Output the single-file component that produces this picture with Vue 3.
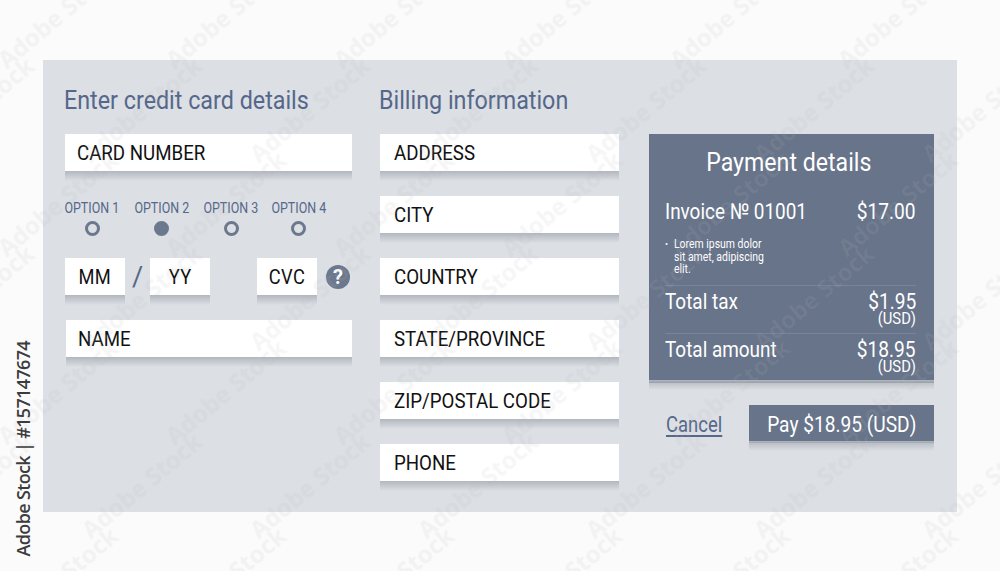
<script setup>
const fields = ['ADDRESS', 'CITY', 'COUNTRY', 'STATE/PROVINCE', 'ZIP/POSTAL CODE', 'PHONE']
const options = [
  { label: 'OPTION 1', on: false },
  { label: 'OPTION 2', on: true },
  { label: 'OPTION 3', on: false },
  { label: 'OPTION 4', on: false },
]
const marks = []
for (let r = -1; r < 7; r++) {
  for (let c = -1; c < 8; c++) {
    marks.push({ x: c * 168 + (r % 2 ? 84 : 0) - 10, y: r * 94 + 50 })
  }
}
</script>

<template>
  <div class="page">
    <main class="panel">
      <section class="col-card">
        <h2 class="title"><span class="cx">Enter credit card details</span></h2>
        <div class="field"><span class="cx">CARD NUMBER</span></div>
        <div class="options">
          <div v-for="o in options" :key="o.label" class="option">
            <span class="opt-label"><span class="cx-c">{{ o.label }}</span></span>
            <span class="radio" :class="{ on: o.on }"></span>
          </div>
        </div>
        <div class="expiry">
          <div class="field small"><span class="cx-c">MM</span></div>
          <span class="slash">/</span>
          <div class="field small"><span class="cx-c">YY</span></div>
          <div class="field small cvc"><span class="cx-c">CVC</span></div>
          <span class="help">?</span>
        </div>
        <div class="field name"><span class="cx">NAME</span></div>
      </section>

      <section class="col-billing">
        <h2 class="title"><span class="cx">Billing information</span></h2>
        <div class="stack">
          <div v-for="f in fields" :key="f" class="field"><span class="cx">{{ f }}</span></div>
        </div>
      </section>

      <section class="col-pay">
        <div class="summary">
          <h3 class="sum-title"><span class="cx-c">Payment details</span></h3>
          <div class="row first">
            <span class="big"><span class="cx">Invoice № 01001</span></span>
            <span class="big right"><span class="cx-r">$17.00</span></span>
          </div>
          <div class="lorem">
            <span class="dot">•</span>
            <span class="cx lorem-text">Lorem ipsum dolor<br />sit amet, adipiscing<br />elit.</span>
          </div>
          <div class="row total">
            <span class="big"><span class="cx">Total tax</span></span>
            <span class="amount">
              <span class="big right"><span class="cx-r">$1.95</span></span>
              <span class="usd"><span class="cx-r">(USD)</span></span>
            </span>
          </div>
          <div class="row total">
            <span class="big"><span class="cx">Total amount</span></span>
            <span class="amount">
              <span class="big right"><span class="cx-r">$18.95</span></span>
              <span class="usd"><span class="cx-r">(USD)</span></span>
            </span>
          </div>
        </div>
        <div class="actions">
          <a class="cancel"><span class="cx-c">Cancel</span></a>
          <button class="pay"><span class="cx-c">Pay $18.95 (USD)</span></button>
        </div>
      </section>
    </main>

    <div class="marks" aria-hidden="true">
      <span v-for="(m, i) in marks" :key="i" class="mark" :style="{ left: m.x + 'px', top: m.y + 'px' }">Adobe Stock</span>
    </div>
    <div class="credit">Adobe Stock | #157147674</div>
  </div>
</template>

<style>
html, body { margin: 0; background: #fff; }
</style>

<style scoped>
.page {
  position: relative;
  width: 1000px;
  height: 571px;
  overflow: hidden;
  padding: 60px 43px 0;
  box-sizing: border-box;
  background: #fbfbfc;
  font-family: Roboto, "Liberation Sans", sans-serif;
}
.panel {
  display: grid;
  grid-template-columns: 287px 239px 285px;
  grid-template-rows: 452px;
  column-gap: 28px;
  height: 452px;
  padding: 0 23px 0 22px;
  box-sizing: border-box;
  background: #dcdfe4;
}
.panel > section { min-width: 0; }
.cx, .cx-c, .cx-r { display: inline-block; white-space: nowrap; transform: scaleX(0.87); }
.cx { transform-origin: left center; }
.cx-c { transform-origin: center; }
.cx-r { transform-origin: right center; }
.title {
  margin: 0 0 0 -1px;
  height: 74px;
  padding-top: 24px;
  box-sizing: border-box;
  font-size: 26px;
  line-height: 32px;
  font-weight: 400;
  color: #55678a;
  white-space: nowrap;
}
.title .cx { transform: scaleX(0.896); }
.field {
  position: relative;
  height: 37px;
  display: flex;
  align-items: center;
  padding-left: 12px;
  background: #fff;
  color: #111;
  font-size: 21px;
  white-space: nowrap;
}
.field .cx { transform: scaleX(0.89); }
.stack .field { padding-left: 14px; }
.field::after, .summary::after, .pay::after {
  content: "";
  position: absolute;
  left: 0;
  right: 0;
  top: 100%;
  height: 10px;
  background: linear-gradient(#b2b7bf, rgba(220, 223, 228, 0));
}
.options {
  display: flex;
  margin-top: 28px;
  margin-left: 0.5px;
  height: 59px;
}
.option {
  width: 69.5px;
  display: flex;
  flex-direction: column;
  align-items: center;
}
.option:first-child { margin-left: -8px; }
.option:last-child { margin-left: -2px; }
.opt-label {
  font-size: 14px;
  line-height: 18px;
  color: #55678a;
  white-space: nowrap;
}
.opt-label .cx-c { transform: scaleX(0.89); }
.radio {
  width: 15px;
  height: 15px;
  margin-top: 4px;
  box-sizing: border-box;
  border: 3px solid #6b788d;
  border-radius: 50%;
}
.radio.on { background: #6b788d; }
.expiry {
  display: flex;
  align-items: center;
  height: 37px;
}
.field.small {
  width: 60px;
  padding: 0;
  justify-content: center;
  flex: none;
  letter-spacing: 0.5px;
}
.slash {
  width: 25px;
  text-align: center;
  font-size: 27px;
  color: #55678a;
}
.field.cvc { margin-left: 47px; }
.help {
  width: 24px;
  height: 24px;
  margin-left: 9px;
  border-radius: 50%;
  background: #6b788d;
  color: #fff;
  font-size: 20px;
  font-weight: 700;
  line-height: 24px;
  text-align: center;
}
.field.name { margin: 25px 0 0 1px; }
.stack { display: flex; flex-direction: column; gap: 25px; }
.col-pay { padding-top: 74px; margin: 0 -2px 0 2px; }
.summary {
  position: relative;
  height: 249px;
  padding: 12px 18px 0 16px;
  box-sizing: border-box;
  background: #67748a;
  border-bottom: 3px solid #58647a;
  color: #fff;
}
.sum-title {
  margin: 0 0 0 -3px;
  font-size: 26px;
  line-height: 32px;
  font-weight: 400;
  text-align: center;
}
.sum-title .cx-c { transform: scaleX(0.89); }
.row { display: flex; justify-content: space-between; }
.row.first { margin-top: 21px; }
.big { display: block; font-size: 22px; line-height: 26px; white-space: nowrap; }
.big .cx { transform: scaleX(0.86); }
.right { text-align: right; }
.lorem {
  display: flex;
  margin-top: 13px;
  height: 37px;
  font-size: 12px;
  line-height: 12.5px;
  white-space: nowrap;
}
.dot { width: 9px; font-size: 9px; }
.total {
  height: 48px;
  padding-top: 3px;
  box-sizing: border-box;
  border-top: 1px solid #77849a;
}
.lorem + .total { margin-top: 10px; }
.amount { display: flex; flex-direction: column; align-items: flex-end; }
.usd { font-size: 17px; line-height: 13px; margin-top: -3px; }
.actions {
  display: flex;
  align-items: center;
  margin-top: 22px;
  height: 38px;
}
.cancel {
  width: 83px;
  margin-left: 17px;
  font-size: 22px;
  line-height: 26px;
  padding-top: 2px;
  color: #55678a;
  white-space: nowrap;
}
.cancel .cx-c {
  transform: scaleX(0.84);
  transform-origin: left center;
  text-decoration: underline;
  text-decoration-thickness: 2px;
  text-underline-offset: 3px;
}
.pay {
  position: relative;
  width: 186px;
  height: 38px;
  padding: 2px 0 0;
  box-sizing: border-box;
  border: 0;
  border-bottom: 2px solid #58647a;
  background: #67748a;
  color: #fff;
  font: 400 22px Roboto, sans-serif;
}
.marks { position: absolute; inset: 0; pointer-events: none; }
.mark {
  position: absolute;
  transform: rotate(-40deg);
  transform-origin: left top;
  font-size: 24px;
  font-weight: 700;
  font-family: "Open Sans", sans-serif;
  color: rgba(255, 255, 255, 0.06);
  text-shadow: 0 0 1px rgba(130, 130, 130, 0.07);
  white-space: nowrap;
}
.credit {
  position: absolute;
  left: 10px;
  bottom: 14px;
  writing-mode: vertical-rl;
  transform: rotate(180deg);
  font-family: "Open Sans", sans-serif;
  font-size: 18px;
  font-weight: 600;
  letter-spacing: -0.65px;
  line-height: 26px;
  color: #3c3c3c;
  white-space: nowrap;
}
</style>
